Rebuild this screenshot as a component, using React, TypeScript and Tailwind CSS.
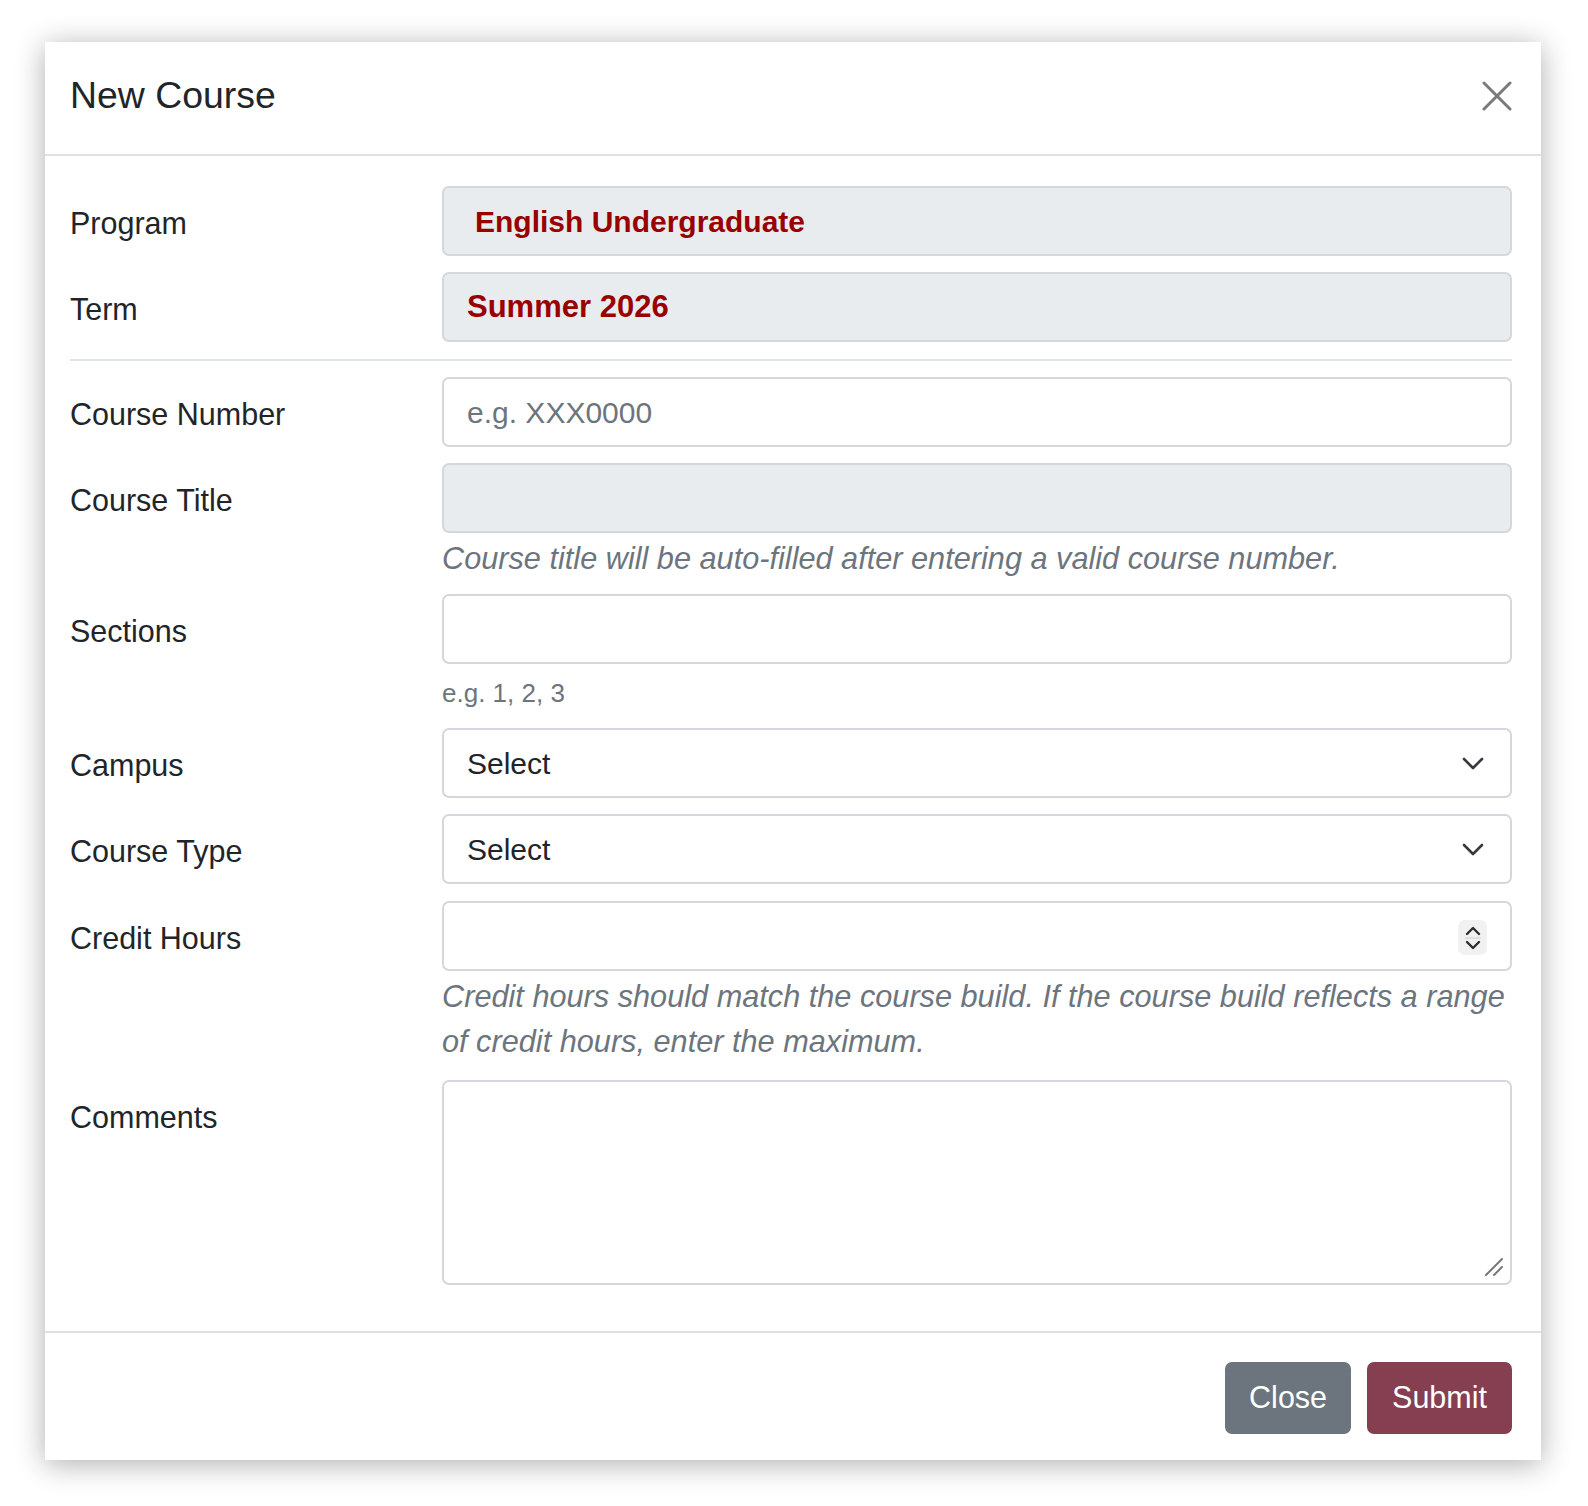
import { ReactNode } from "react";

const FONT = "font-['Liberation_Sans',Arial,sans-serif]";

function Row({
  label,
  children,
  className = "",
}: {
  label: string;
  children: ReactNode;
  className?: string;
}) {
  return (
    <div className={`flex ${className}`}>
      <div className="w-[372px] shrink-0 h-[70px] pt-[5px] flex items-center text-[30.5px] text-[#212529]">
        {label}
      </div>
      <div className="flex-1 min-w-0">{children}</div>
    </div>
  );
}

function Box({
  children,
  muted = false,
  className = "",
}: {
  children?: ReactNode;
  muted?: boolean;
  className?: string;
}) {
  return (
    <div
      className={`relative h-[70px] rounded-[7px] border-2 border-[#d4d8dd] flex items-center px-[23px] text-[30px] ${
        muted ? "bg-[#e9ecef]" : "bg-white"
      } ${className}`}
    >
      {children}
    </div>
  );
}

function Chevron() {
  return (
    <svg width="22" height="13" viewBox="0 0 22 13" className="shrink-0">
      <path
        d="M2 2l9 9 9-9"
        fill="none"
        stroke="#343a40"
        strokeWidth="2.6"
        strokeLinecap="round"
        strokeLinejoin="round"
      />
    </svg>
  );
}

function SelectBox({ value }: { value: string }) {
  return (
    <Box className="justify-between pr-[26px]">
      <span className="text-[#212529]">{value}</span>
      <Chevron />
    </Box>
  );
}

function Spinner() {
  return (
    <div className="absolute right-[23px] top-[17px] w-[29px] h-[35px] rounded-[7px] bg-[#f1f1f1] flex flex-col items-center justify-center">
      <svg width="18" height="30" viewBox="0 0 18 30">
        <path d="M3 11l6-6 6 6" fill="none" stroke="#2f2f2f" strokeWidth="2.4" strokeLinecap="round" strokeLinejoin="round" />
        <line x1="1" y1="15" x2="17" y2="15" stroke="#d9d9d9" strokeWidth="1.5" />
        <path d="M3 19l6 6 6-6" fill="none" stroke="#2f2f2f" strokeWidth="2.4" strokeLinecap="round" strokeLinejoin="round" />
      </svg>
    </div>
  );
}

function Help({ children, className = "" }: { children: ReactNode; className?: string }) {
  return (
    <p className={`italic text-[30.7px] leading-[45px] text-[#6c757d] ${className}`}>
      {children}
    </p>
  );
}

export default function App() {
  return (
    <div className={`min-h-screen bg-white pt-[42px] pl-[45px] ${FONT}`}>
      <div className="w-[1496px] bg-white shadow-[0_4px_28px_rgba(0,0,0,0.32)]">
        {/* header */}
        <div className="h-[114px] flex items-center justify-between pl-[25px] pr-[29px] border-b-2 border-[#dee2e6]">
          <h5 className="text-[37.4px] text-[#212529] leading-none -mt-[4px]">New Course</h5>
          <button className="w-[30px] h-[30px] -mt-[4px]" aria-label="Close">
            <svg width="30" height="30" viewBox="0 0 30 30">
              <path d="M2 2l26 26M28 2L2 28" stroke="#7a7a7a" strokeWidth="3" strokeLinecap="round" />
            </svg>
          </button>
        </div>

        {/* body */}
        <div className="pl-[25px] pr-[29px] pt-[30px] pb-[30px]">
          <Row label="Program" className="mb-[16px]">
            <Box muted>
              <span className="font-bold text-[#990000] pl-[8px]">English Undergraduate</span>
            </Box>
          </Row>
          <Row label="Term">
            <Box muted>
              <span className="font-bold text-[#990000] text-[31px]">Summer 2026</span>
            </Box>
          </Row>

          <hr className="mt-[17px] mb-[16px] border-t-2 border-[#dfe2e6]" />

          <Row label="Course Number" className="mb-[16px]">
            <Box>
              <input
                className="w-full bg-transparent outline-none text-[#212529] placeholder:text-[#6c757d]"
                placeholder="e.g. XXX0000"
              />
            </Box>
          </Row>
          <Row label="Course Title" className="mb-[13px]">
            <Box muted />
            <Help className="mt-[3px]">
              Course title will be auto-filled after entering a valid course number.
            </Help>
          </Row>
          <Row label="Sections" className="mb-[15px]">
            <Box />
            <p className="mt-[10px] text-[26px] leading-[39px] text-[#6c757d]">e.g. 1, 2, 3</p>
          </Row>
          <Row label="Campus" className="mb-[16px]">
            <SelectBox value="Select" />
          </Row>
          <Row label="Course Type" className="mb-[17px]">
            <SelectBox value="Select" />
          </Row>
          <Row label="Credit Hours" className="mb-[16px]">
            <Box>
              <Spinner />
            </Box>
            <Help className="mt-[3px]">
              Credit hours should match the course build. If the course build reflects a range
              of credit hours, enter the maximum.
            </Help>
          </Row>
          <Row label="Comments" className="mb-[16px]">
            <div className="relative h-[205px] rounded-[7px] border-2 border-[#d4d8dd] bg-white">
              <svg
                width="20"
                height="20"
                viewBox="0 0 20 20"
                className="absolute right-[6px] bottom-[6px]"
              >
                <path d="M2 18L18 2M10 18l8-8" stroke="#777" strokeWidth="2" strokeLinecap="round" />
              </svg>
            </div>
          </Row>
        </div>

        {/* footer */}
        <div className="border-t-2 border-[#dee2e6] pt-[29px] pb-[26px] pr-[29px] flex justify-end gap-[16px]">
          <button className="h-[72px] px-[24px] rounded-[7px] bg-[#6c757d] text-white text-[30.5px]">
            Close
          </button>
          <button className="h-[72px] px-[25px] rounded-[7px] bg-[#853f50] text-white text-[30.5px]">
            Submit
          </button>
        </div>
      </div>
    </div>
  );
}
